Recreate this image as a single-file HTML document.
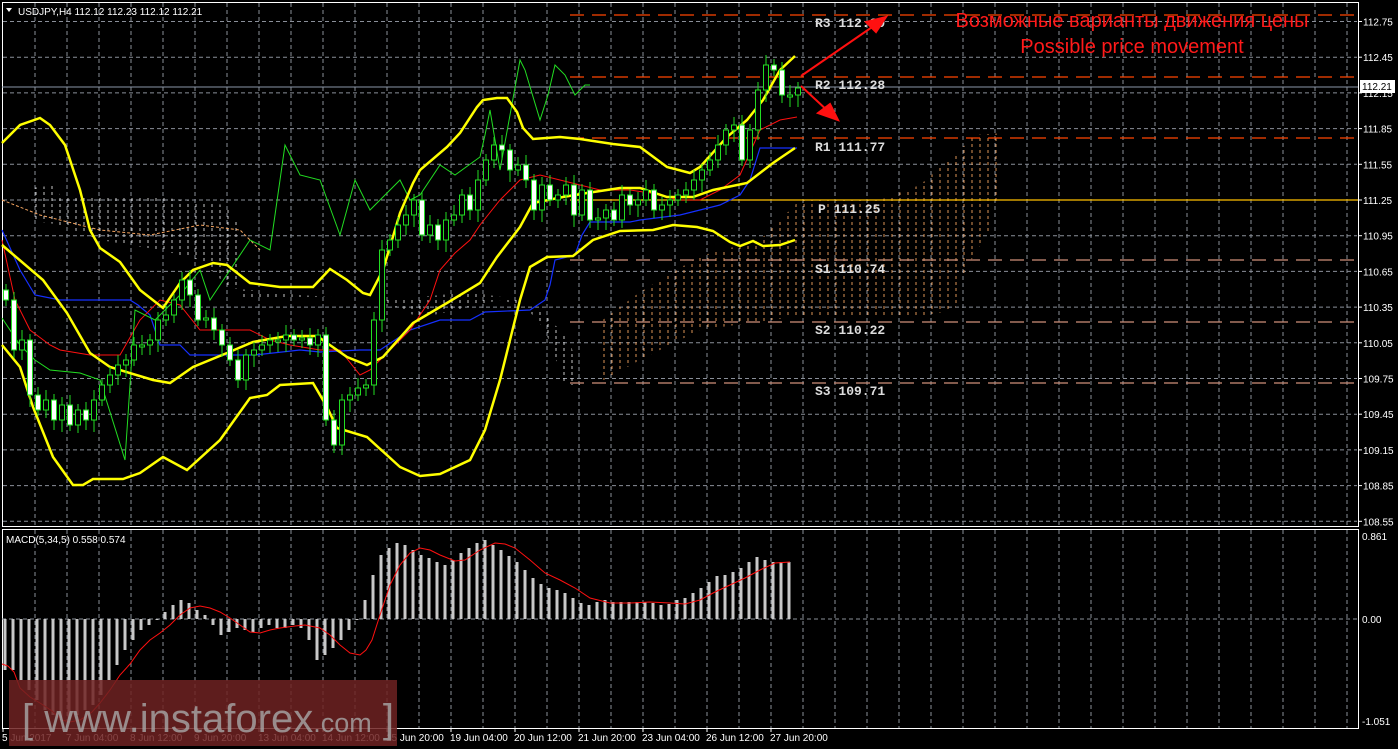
<!DOCTYPE html>
<html><head><meta charset="utf-8"><style>
html,body{margin:0;padding:0;background:#000;width:1398px;height:749px;overflow:hidden}
svg{display:block}
text{font-family:"Liberation Sans",sans-serif}
text.mono{font-family:"Liberation Mono",monospace}
</style></head><body>
<svg id="s" width="1398" height="749" viewBox="0 0 1398 749" xmlns="http://www.w3.org/2000/svg">
<defs>
<pattern id="po" width="8" height="6" patternUnits="userSpaceOnUse"><line x1="4" y1="0" x2="4" y2="3" stroke="#f4a460" stroke-width="1"/></pattern>
<pattern id="pw" width="8" height="6" patternUnits="userSpaceOnUse"><line x1="4" y1="0" x2="4" y2="3" stroke="#ddd" stroke-width="1"/></pattern>
</defs>
<rect width="1398" height="749" fill="#000"/>
<g id="grid" stroke="#8a8f99" stroke-width="1" stroke-dasharray="4,3"></g>
<rect x="2.5" y="2.5" width="1356" height="524" fill="none" stroke="#fff"/>
<rect x="2.5" y="529.5" width="1356" height="199" fill="none" stroke="#fff"/>
<polygon points="30,188 58,185 60,196 150,196 225,205 240,225 240,300 390,300 470,292 520,300 545,330 565,385 580,385 570,340 540,310 500,300 420,318 380,300 300,295 230,288 200,260 160,250 100,240 60,225 30,220" fill="url(#pw)" opacity="0.9"/>
<polygon points="600,322 640,292 700,256 760,240 800,200 880,200 920,185 960,150 975,135 1003,133 1003,170 990,230 965,270 955,310 920,316 800,316 700,330 640,360 600,382" fill="url(#po)" opacity="0.9"/>
<polyline points="2,200 40,215 100,230 150,235 200,225 240,230 260,250" fill="none" stroke="#f4a460" stroke-dasharray="3,2"/>
<g stroke-dasharray="14,8" stroke-width="1.2">
<line x1="570" y1="15" x2="1358" y2="15" stroke="#ff4500"/>
<line x1="570" y1="77" x2="1358" y2="77" stroke="#ff4500"/>
<line x1="570" y1="138" x2="1358" y2="138" stroke="#ff4500"/>
<line x1="570" y1="260" x2="1358" y2="260" stroke="#d0907a"/>
<line x1="570" y1="322" x2="1358" y2="322" stroke="#d0907a"/>
<line x1="570" y1="383" x2="1358" y2="383" stroke="#d0907a"/>
</g>
<line x1="570" y1="200" x2="1358" y2="200" stroke="#ffc000" stroke-width="1.2"/>
<line x1="2" y1="87" x2="1358" y2="87" stroke="#8a96a8"/>
<g font-size="13" fill="#ddd" font-weight="bold">
<text class="mono" x="815" y="27">R3 112.80</text>
<text class="mono" x="815" y="89">R2 112.28</text>
<text class="mono" x="815" y="151">R1 111.77</text>
<text class="mono" x="818" y="213">P 111.25</text>
<text class="mono" x="815" y="273">S1 110.74</text>
<text class="mono" x="815" y="334">S2 110.22</text>
<text class="mono" x="815" y="395">S3 109.71</text>
</g>
<polyline points="2,230 20,270 35,295 60,300 130,300 138,305 150,315 160,345 180,345 190,355 255,355 300,350 320,352 360,350 380,350 395,340 410,330 440,320 470,320 485,312 530,310 545,300 550,285 555,260 575,255 582,235 590,222 630,222 640,220 680,215 700,210 720,205 740,195 750,180 760,148 780,148 797,148" fill="none" stroke="#1530ff" stroke-width="1.2"/>
<polyline points="2,240 15,300 30,330 50,345 60,350 90,355 120,355 140,320 160,300 180,305 200,330 230,330 250,330 270,340 290,345 320,350 340,350 360,375 370,370 390,350 410,330 430,300 440,270 455,253 470,240 480,225 500,200 520,180 540,175 580,185 600,190 630,190 650,193 680,200 700,200 720,190 740,175 760,130 780,120 797,117" fill="none" stroke="#ff1010" stroke-width="1"/>
<polyline points="2,318 20,345 35,360 50,370 80,373 100,380 125,460 135,310 155,320 180,295 200,270 210,300 230,270 250,240 270,250 285,145 300,175 320,180 340,235 355,180 370,210 400,180 410,200 420,195 440,165 455,175 480,157 485,135 490,110 500,170 520,60 525,70 540,120 548,95 555,65 565,75 575,95 585,85 590,85" fill="none" stroke="#22dd22" stroke-width="1"/>
<g fill="none" stroke="#ffff00" stroke-width="2.5">
<polyline points="2,143 20,125 40,118 50,125 65,145 80,190 90,230 100,248 120,262 140,290 163,308 180,283 193,270 213,263 227,265 250,283 280,287 313,287 330,269 347,280 363,293 370,295 383,270 400,213 413,183 420,170 447,147 460,133 477,107 483,100 497,98 507,98 517,112 523,128 533,139 560,137 580,139 613,144 640,147 667,167 690,173 700,167 727,137 747,120 763,100 780,70 795,56"/>
<polyline points="2,245 43,280 67,313 90,353 110,367 153,380 170,383 193,367 227,353 253,342 287,336 317,336 327,343 347,357 367,365 383,357 413,323 447,303 480,283 497,257 520,227 533,203 563,197 587,193 620,188 640,188 667,197 693,197 713,190 747,183 773,163 795,148"/>
<polyline points="2,345 20,367 33,407 53,457 73,485 83,485 93,479 123,479 140,473 163,457 187,470 220,440 250,398 267,395 280,385 313,383 327,407 337,428 367,437 400,467 420,476 440,474 470,460 485,430 500,380 510,340 520,300 530,267 547,257 573,256 593,240 620,231 653,230 673,225 697,227 713,231 730,242 740,246 753,241 763,246 780,245 795,240"/>
</g>
<g id="candles"></g>
<g stroke="#ff1010" stroke-width="2" fill="#ff1010">
<line x1="801" y1="76" x2="878" y2="23"/>
<polygon points="886,17 866,22 876,32"/>
<line x1="801" y1="86" x2="830" y2="113"/>
<polygon points="838,120 818,113 830,104"/>
</g>
<text x="1132" y="27" font-size="20" fill="#ff1a1a" text-anchor="middle">Возможные варианты движения цены</text>
<text x="1132" y="53" font-size="20" fill="#ff1a1a" text-anchor="middle">Possible price movement</text>
<polygon points="6,8 12,8 9,12" fill="#fff"/>
<text x="18" y="15" font-size="10" fill="#fff">USDJPY,H4  112.12 112.23 112.12 112.21</text>
<g font-size="10" fill="#fff" id="axis"></g>
<rect x="1360" y="80" width="35" height="13" fill="#fff"/>
<text x="1362" y="90" font-size="10" fill="#000">112.21</text>
<line x1="2" y1="619" x2="1358" y2="619" stroke="#8a8f99" stroke-dasharray="4,3"/>
<g id="macd"></g>
<polyline points="2,664 8,666 14,672 20,688 30,697 40,703 52,711 62,720 70,722 80,720 92,712 100,703 110,690 120,675 130,664 140,650 150,640 160,633 170,625 180,615 190,608 200,606 210,608 220,612 230,618 240,625 250,632 260,633 270,630 280,628 295,626 305,625 320,628 330,635 340,645 350,653 360,655 366,650 372,640 380,615 390,585 400,565 410,553 420,548 430,550 440,555 455,561 465,560 480,550 495,543 505,544 515,548 530,560 545,573 560,580 575,588 590,598 610,603 630,603 650,602 670,603 685,604 700,600 715,592 730,585 745,578 760,570 775,563 790,562" fill="none" stroke="#ff1010" stroke-width="1"/>
<text x="6" y="543" font-size="10" fill="#fff">MACD(5,34,5) 0.558 0.574</text>
<text x="1362" y="540" font-size="10" fill="#fff">0.861</text>
<text x="1362" y="623" font-size="10" fill="#fff">0.00</text>
<text x="1362" y="725" font-size="10" fill="#fff">-1.051</text>
<g font-size="10" fill="#fff" id="time"></g>
<rect x="9" y="680" width="388" height="66" fill="#6e2222" opacity="0.85"/>
<text x="22" y="732" font-size="40" fill="#a8a8a8" opacity="0.8">[ www.instaforex<tspan font-size="27">.com</tspan> ]</text>
</svg>
<script>
var NS="http://www.w3.org/2000/svg";
function el(p,t,a,txt){var e=document.createElementNS(NS,t);for(var k in a)e.setAttribute(k,a[k]);if(txt!=null)e.textContent=txt;p.appendChild(e);return e;}
var g=document.getElementById('grid');
for(var x=35;x<1358;x+=32){el(g,'line',{x1:x,y1:3,x2:x,y2:526});el(g,'line',{x1:x,y1:530,x2:x,y2:728});}
var ax=document.getElementById('axis');
var labels=["112.75","112.45","112.15","111.85","111.55","111.25","110.95","110.65","110.35","110.05","109.75","109.45","109.15","108.85","108.55"];
for(var i=0;i<labels.length;i++){var y=21.5+i*35.7;el(g,'line',{x1:3,y1:y,x2:1357,y2:y});el(ax,'line',{x1:1358,y1:y,x2:1362,y2:y,stroke:'#fff'});el(ax,'text',{x:1363,y:y+4},labels[i]);}
var c=document.getElementById('candles');
var cl=[300,350,340,395,410,400,420,405,425,410,420,400,385,375,365,360,345,345,340,320,315,300,280,295,320,318,330,345,360,380,355,350,345,340,340,335,340,338,345,335,420,445,400,395,388,385,320,250,240,225,215,200,235,225,240,220,215,195,210,180,160,145,150,170,165,180,210,185,200,195,185,215,190,220,218,210,220,195,205,200,190,210,205,200,195,190,180,170,160,145,130,125,160,130,90,65,70,95,95,88];
var prev=290;
for(var i=0;i<cl.length;i++){var x=6+i*8,o=prev,cc=cl[i];var t=Math.min(o,cc),b=Math.max(o,cc);if(b-t<2)b=t+2;
el(c,'line',{x1:x,y1:t-6-(i%3)*2,x2:x,y2:b+6+(i%4)*2,stroke:'#22dd22','stroke-width':1});
el(c,'rect',{x:x-2.5,y:t,width:5,height:b-t,fill:cc>o?'#fff':'#000',stroke:'#22dd22','stroke-width':1});prev=cc;}
var m=document.getElementById('macd');
var mv=[670,670,680,690,700,710,715,720,720,715,710,705,695,680,665,650,640,630,625,620,612,605,600,603,610,615,625,635,632,628,630,632,628,625,628,628,625,628,640,660,655,648,640,630,620,600,575,555,548,543,545,550,555,558,562,565,560,553,548,543,540,545,550,556,562,570,578,584,588,590,593,598,603,605,602,600,602,602,602,602,602,603,605,604,600,598,593,588,582,576,575,572,568,562,557,560,562,562,562];
var d="";for(var i=0;i<mv.length;i++){var x=5+i*8;d+="M"+x+" 619V"+mv[i];}
el(m,'path',{d:d,stroke:'#c8c8c8','stroke-width':3,fill:'none'});
var tm=document.getElementById('time');
var tl=["5 Jun 2017","7 Jun 04:00","8 Jun 12:00","9 Jun 20:00","13 Jun 04:00","14 Jun 12:00","15 Jun 20:00","19 Jun 04:00","20 Jun 12:00","21 Jun 20:00","23 Jun 04:00","26 Jun 12:00","27 Jun 20:00"];
for(var i=0;i<tl.length;i++){var x=i==0?2:66+(i-1)*64;el(tm,'line',{x1:x+1,y1:728,x2:x+1,y2:732,stroke:'#fff'});el(tm,'text',{x:x,y:741},tl[i]);}
</script>
</body></html>
